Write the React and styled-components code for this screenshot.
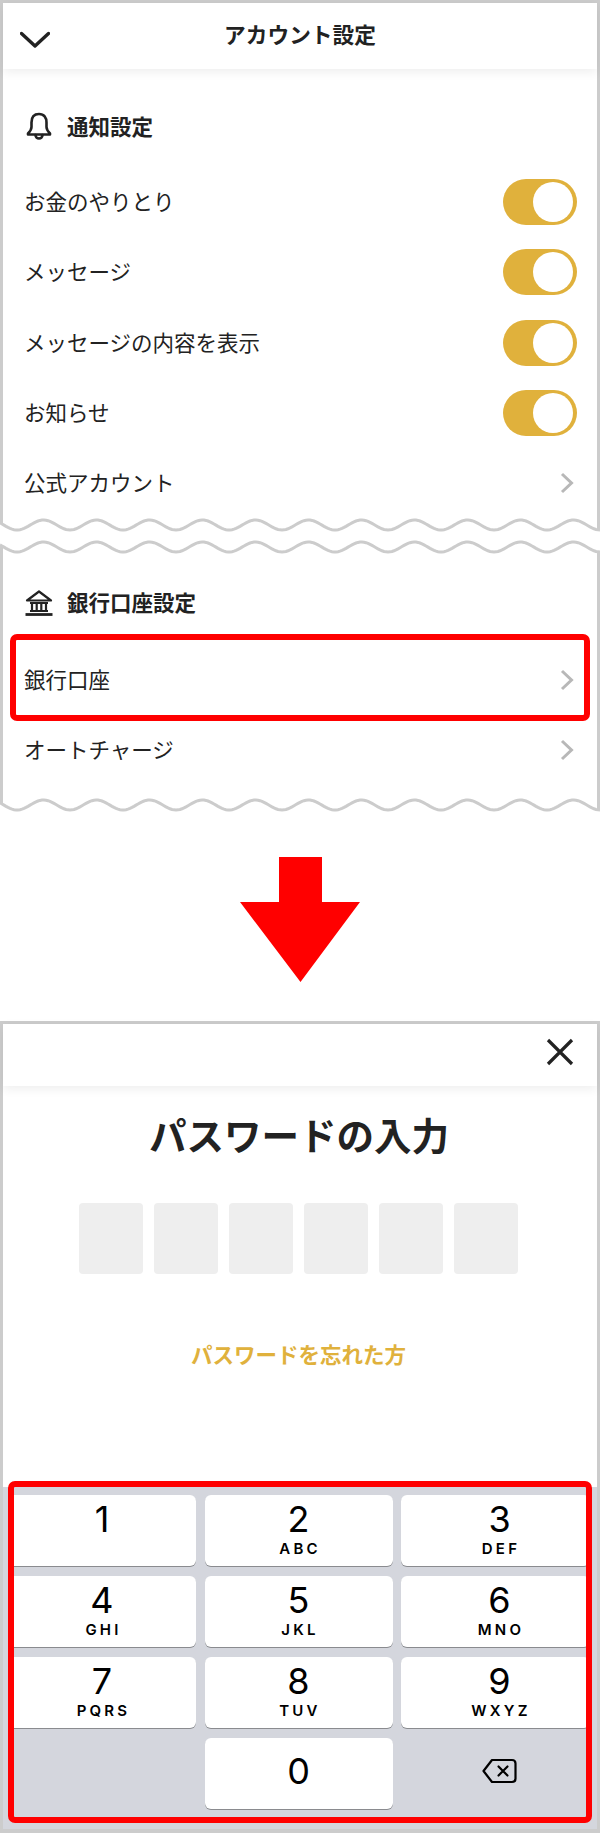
import React from "react";
import styled, { createGlobalStyle } from "styled-components";

const JP = `"Noto Sans CJK JP", "Noto Sans", sans-serif`;
const GOLD = "#e0b13c";
const INK = "#222222";
const LINE = "#cccccc";

const Global = createGlobalStyle`
  html, body { margin: 0; padding: 0; background: #fff; }
  body { font-family: ${JP}; color: ${INK}; }
  * { box-sizing: border-box; }
`;

const Page = styled.div`
  width: 600px;
  height: 1833px;
  overflow: hidden;
  background: #fff;
`;

const Panel = styled.section`
  border-left: 3px solid ${LINE};
  border-right: 3px solid ${LINE};
  border-top: ${(p) => (p.$top ? `3px solid ${LINE}` : "0")};
  border-bottom: ${(p) => (p.$bottom ? `4px solid ${LINE}` : "0")};
  padding-bottom: ${(p) => p.$pb || 0}px;
  background: #fff;
`;

const TopBar = styled.header`
  position: relative;
  height: ${(p) => p.$h}px;
  display: flex;
  align-items: flex-start;
  justify-content: ${(p) => p.$justify || "flex-start"};
  background: #fff;
  box-shadow: 0 3px 10px rgba(0, 0, 0, 0.07);
`;

const BarTitle = styled.h1`
  position: absolute;
  left: 0;
  right: 0;
  top: 13px;
  margin: 0;
  text-align: center;
  font-size: 21.7px;
  line-height: 36px;
  font-weight: 700;
`;

const BackIcon = styled.svg`
  width: 30px;
  height: 18px;
  margin: 28px 0 0 17px;
`;

const CloseIcon = styled.svg`
  width: 28px;
  height: 28px;
  margin: 14px 23px 0 0;
`;

const Heading = styled.h2`
  height: ${(p) => p.$h}px;
  padding: ${(p) => p.$pt}px 0 0 22px;
  margin: 0;
  display: flex;
  align-items: center;
  font-size: 21.5px;
  font-weight: 700;
`;

const HeadingIcon = styled.span`
  width: 42px;
  padding-right: 14px;
  display: flex;
  justify-content: center;
`;

const HeadingText = styled.span`
  padding-bottom: 2px;
`;

const Row = styled.div`
  position: relative;
  height: ${(p) => p.$h}px;
  display: flex;
  align-items: center;
  justify-content: space-between;
  padding: 0 20px 0 21px;
  font-size: 21.5px;
`;

const RowLabel = styled.span`
  padding-bottom: 3px;
`;

const Toggle = styled.div`
  width: 74px;
  height: 46px;
  border-radius: 23px;
  background: ${GOLD};
  padding: 3px 4px;
  display: flex;
  justify-content: flex-end;
`;

const Knob = styled.span`
  width: 40px;
  height: 40px;
  border-radius: 50%;
  background: #fff;
`;

const ChevronIcon = styled.svg`
  width: 14px;
  height: 22px;
  margin-right: 3px;
`;

const Highlight = styled.div`
  position: absolute;
  border: 6px solid #ff0000;
  border-radius: 7px;
  left: ${(p) => p.$l}px;
  right: ${(p) => p.$r}px;
  top: ${(p) => p.$t}px;
  bottom: ${(p) => p.$b}px;
  pointer-events: none;
`;

const WaveSvg = styled.svg`
  display: block;
  width: 600px;
  height: 14px;
  margin-bottom: ${(p) => p.$mb || 0}px;
`;

const ArrowBlock = styled.div`
  display: flex;
  justify-content: center;
  padding: 45px 0 39px;
`;

const ArrowIcon = styled.svg`
  display: block;
  width: 120px;
  height: 125px;
`;

const Title = styled.h1`
  margin: 22px 0 0;
  padding-right: 2px;
  text-align: center;
  font-size: 37.5px;
  line-height: 52px;
  font-weight: 700;
`;

const Cells = styled.div`
  display: flex;
  gap: 11.7px;
  margin: 43px 0 0 76.3px;
`;

const Cell = styled.div`
  width: 63.3px;
  height: 71px;
  border-radius: 4px;
  background: #eeeeee;
`;

const Forgot = styled.div`
  margin-top: 65px;
  text-align: center;
  padding-right: 3px;
  font-size: 21.5px;
  line-height: 30px;
  font-weight: 700;
  color: ${GOLD};
`;

const Keyboard = styled.div`
  position: relative;
  margin-top: 118px;
  height: 342px;
  padding: 8px 0 0 5px;
  background: #d4d6dd;
  display: grid;
  grid-template-columns: 188px 188px 189px;
  grid-auto-rows: 71px;
  column-gap: 8.5px;
  row-gap: 10px;
`;

const Key = styled.div`
  border-radius: 6px;
  background: ${(p) => (p.$blank ? "transparent" : "#fff")};
  box-shadow: ${(p) => (p.$blank ? "none" : "0 1px 0 #8a8b8f")};
  display: flex;
  flex-direction: column;
  align-items: center;
  justify-content: ${(p) => (p.$middle ? "center" : "flex-start")};
  padding: ${(p) => (p.$middle ? "0 0 5px" : "6px 0 0")};
  padding-left: ${(p) => (p.$shift ? "8px" : "0")};
  font-family: Inter, "Liberation Sans", sans-serif;
  color: #000;
`;

const Digit = styled.span`
  font-size: 36px;
  line-height: 36px;
  font-weight: 400;
`;

const Letters = styled.span`
  margin-top: 5px;
  padding-left: 3px;
  font-size: 15px;
  line-height: 14px;
  font-weight: 600;
  letter-spacing: 3.2px;
`;

const BackspaceIcon = styled.svg`
  width: 35px;
  height: 26px;
`;

/* ---- drawings ---- */

const wavePath = (phasePeak, period, amp) => {
  let d = "";
  for (let x = 0; x <= 600; x += 2) {
    const y = 7 - amp * Math.cos((2 * Math.PI * (x - phasePeak)) / period);
    d += `${x === 0 ? "M" : "L"}${x} ${y.toFixed(2)}`;
  }
  return d;
};
const waveY = (x) => 7 - 5 * Math.cos((2 * Math.PI * (x - 43.5)) / 53);

const Wave = ({ up, mb }) => (
  <WaveSvg viewBox="0 0 600 14" $mb={mb}>
    <path d={wavePath(43.5, 53, 5)} fill="none" stroke={LINE} strokeWidth="3" />
    {up ? (
      <>
        <path d={`M1.5 0V${waveY(1.5).toFixed(1)}`} stroke={LINE} strokeWidth="3" />
        <path d={`M598.5 0V${waveY(598.5).toFixed(1)}`} stroke={LINE} strokeWidth="3" />
      </>
    ) : (
      <>
        <path d={`M1.5 ${waveY(1.5).toFixed(1)}V14`} stroke={LINE} strokeWidth="3" />
        <path d={`M598.5 ${waveY(598.5).toFixed(1)}V14`} stroke={LINE} strokeWidth="3" />
      </>
    )}
  </WaveSvg>
);

const Bell = () => (
  <svg width="26" height="28" viewBox="0 0 26 28" fill="none" stroke={INK} strokeWidth="2.6" strokeLinejoin="round" strokeLinecap="round">
    <path d="M13 2C8 2 5.5 5.5 5.5 10.5V15C5.5 18 3.5 20 2 21.5V22.5H24V21.5C22.5 20 20.5 18 20.5 15V10.5C20.5 5.5 18 2 13 2Z" />
    <path d="M9.5 23a3.5 3.5 0 0 0 7 0" />
  </svg>
);

const Bank = () => (
  <svg width="28" height="26" viewBox="0 0 28 26" fill="none" stroke={INK} strokeWidth="2.2">
    <path d="M2 10.5L14 1.5L26 10.5Z" strokeLinejoin="round" />
    <path d="M5 13H23M5 21H23" strokeWidth="1.8" />
    <path d="M7 13V21M11.7 13V21M16.3 13V21M21 13V21" />
    <path d="M0.5 24.5H27.5" strokeWidth="2.8" />
  </svg>
);

const Chevron = () => (
  <ChevronIcon viewBox="0 0 14 22" fill="none" stroke="#b8b8b8" strokeWidth="3">
    <path d="M2 2L11.5 11L2 20" />
  </ChevronIcon>
);

/* ---- data ---- */

const notifications = [
  { label: "お金のやりとり", toggle: true },
  { label: "メッセージ", toggle: true },
  { label: "メッセージの内容を表示", toggle: true },
  { label: "お知らせ", toggle: true },
  { label: "公式アカウント", toggle: false },
];

const keys = [
  ["1", ""],
  ["2", "ABC"],
  ["3", "DEF"],
  ["4", "GHI"],
  ["5", "JKL"],
  ["6", "MNO"],
  ["7", "PQRS"],
  ["8", "TUV"],
  ["9", "WXYZ"],
];

export default function App() {
  return (
    <Page>
      <Global />

      <Panel $top>
        <TopBar $h={66}>
          <BackIcon viewBox="0 0 30 18" fill="none" stroke={INK} strokeWidth="3.4" strokeLinecap="round" strokeLinejoin="round">
            <path d="M4.5 2.5L18 15L31.5 2.5" transform="translate(-3 0)" />
          </BackIcon>
          <BarTitle>アカウント設定</BarTitle>
        </TopBar>
        <Heading $h={98} $pt={16}>
          <HeadingIcon>
            <Bell />
          </HeadingIcon>
          <HeadingText>通知設定</HeadingText>
        </Heading>
        {notifications.map((n) => (
          <Row key={n.label} $h={70.3}>
            <RowLabel>{n.label}</RowLabel>
            {n.toggle ? (
              <Toggle>
                <Knob />
              </Toggle>
            ) : (
              <Chevron />
            )}
          </Row>
        ))}
      </Panel>
      <Wave up mb={8} />
      <Wave />

      <Panel $pb={13}>
        <Heading $h={91} $pt={6}>
          <HeadingIcon>
            <Bank />
          </HeadingIcon>
          <HeadingText>銀行口座設定</HeadingText>
        </Heading>
        <Row $h={70}>
          <RowLabel>銀行口座</RowLabel>
          <Chevron />
          <Highlight $l={7} $r={7} $t={-11} $b={-6} />
        </Row>
        <Row $h={70}>
          <RowLabel>オートチャージ</RowLabel>
          <Chevron />
        </Row>
      </Panel>
      <Wave up />

      <ArrowBlock>
        <ArrowIcon viewBox="0 0 120 125" fill="#ff0000">
          <path d="M39 0H82V45H120L60.5 125L0 45H39Z" />
        </ArrowIcon>
      </ArrowBlock>

      <Panel $top $bottom>
        <TopBar $h={62} $justify="flex-end">
          <CloseIcon viewBox="0 0 28 28" fill="none" stroke={INK} strokeWidth="3.2">
            <path d="M2 2L26 26M26 2L2 26" />
          </CloseIcon>
        </TopBar>
        <Title>パスワードの入力</Title>
        <Cells>
          {[0, 1, 2, 3, 4, 5].map((i) => (
            <Cell key={i} />
          ))}
        </Cells>
        <Forgot>パスワードを忘れた方</Forgot>
        <Keyboard>
          {keys.map(([d, l], i) => (
            <Key key={d} $shift={i % 3 === 2}>
              <Digit>{d}</Digit>
              {l && <Letters>{l}</Letters>}
            </Key>
          ))}
          <Key $blank />
          <Key $middle>
            <Digit>0</Digit>
          </Key>
          <Key $blank $middle $shift>
            <BackspaceIcon viewBox="0 0 35 26" fill="none" stroke="#000" strokeWidth="2.2" strokeLinejoin="round" strokeLinecap="round">
              <path d="M10 2H30Q33.5 2 33.5 5.5V20.5Q33.5 24 30 24H10L1.5 13Z" />
              <path d="M16.5 8.5L25.5 17.5M25.5 8.5L16.5 17.5" />
            </BackspaceIcon>
          </Key>
          <Highlight $l={5} $r={5} $t={-6} $b={6} />
        </Keyboard>
      </Panel>
    </Page>
  );
}
